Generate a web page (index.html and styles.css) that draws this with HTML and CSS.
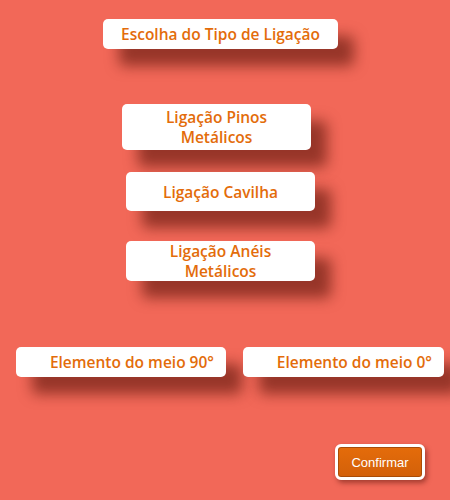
FILE: index.html
```html
<!DOCTYPE html>
<html lang="pt">
<head>
<meta charset="utf-8">
<link rel="stylesheet" href="styles.css">
</head>
<body>
<main class="page">
  <div class="card title">Escolha do Tipo de Ligação</div>
  <div class="card opt opt-pinos">Ligação Pinos<br>Metálicos</div>
  <div class="card opt opt-cavilha">Ligação Cavilha</div>
  <div class="card opt opt-aneis">Ligação Anéis<br>Metálicos</div>
  <div class="row">
    <div class="card elem elem-90">Elemento do meio 90°</div>
    <div class="card elem elem-0">Elemento do meio 0°</div>
  </div>
  <div class="actions">
    <button class="confirm">Confirmar</button>
  </div>
</main>
</body>
</html>
```
FILE: styles.css
```css
html, body {
  margin: 0;
  padding: 0;
  background: #f26858;
}
.page {
  width: 450px;
  height: 500px;
  display: flex;
  flex-direction: column;
  align-items: flex-start;
  font-family: "Open Sans", sans-serif;
}
.card {
  box-sizing: border-box;
  background: #ffffff;
  border-radius: 5px;
  color: #e36c0a;
  font-weight: 600;
  font-size: 15.5px;
  line-height: 20px;
  display: flex;
  align-items: center;
  justify-content: center;
  text-align: center;
  box-shadow: 16px 17px 14px rgba(90, 20, 10, 0.6);
}
.title {
  margin: 19px 0 0 103px;
  width: 235px;
  height: 30px;
}
.opt { width: 189px; }
.opt-pinos {
  margin: 55px 0 0 122px;
  height: 46px;
}
.opt-cavilha {
  margin: 22px 0 0 126px;
  height: 39px;
}
.opt-aneis {
  margin: 30px 0 0 126px;
  height: 40px;
}
.row {
  display: flex;
  margin: 66px 0 0 16px;
  gap: 17px;
}
.elem {
  height: 30px;
  justify-content: flex-end;
  padding-right: 12px;
}
.elem-90 { width: 210px; }
.elem-0 { width: 201px; }
.actions {
  margin: 67px 0 0 335px;
}
.confirm {
  box-sizing: border-box;
  width: 90px;
  height: 36px;
  border: 3px solid #ffffff;
  border-radius: 6px;
  background: linear-gradient(#e56c0a, #d2600a);
  color: #ffffff;
  font-family: "Liberation Sans", Arial, sans-serif;
  font-size: 13px;
  padding: 0;
  box-shadow: inset 0 0 0 1px #a94c08, 2px 3px 5px rgba(90, 20, 10, 0.5);
}
```
